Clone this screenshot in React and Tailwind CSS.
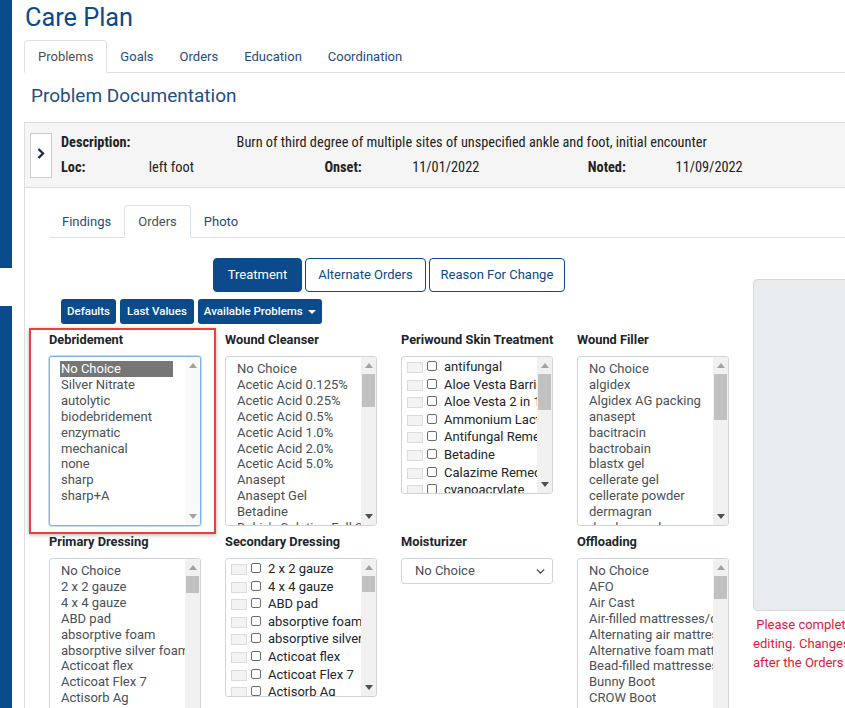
import React from "react";
import { ChevronDown } from "lucide-react";

function Arrow({ dir, dark }) {
  return (
    <svg width="8" height="5" viewBox="0 0 8 5">
      <path d={dir === "up" ? "M0 5 L4 0 L8 5Z" : "M0 0 L4 5 L8 0Z"} fill={dark ? "#505050" : "#a3a3a3"} />
    </svg>
  );
}

function Scrollbar({ thumb, empty }) {
  return (
    <div className={`w-[15px] shrink-0 flex flex-col ${empty ? "bg-[#fafafa]" : "bg-[#f1f1f1]"}`}>
      <div className="h-[17px] flex items-center justify-center">
        <Arrow dir="up" />
      </div>
      <div className="flex-1">{thumb && <div className={`mx-auto w-[13px] bg-[#c1c1c1] ${thumb}`} />}</div>
      <div className="h-[17px] flex items-center justify-center">
        <Arrow dir="down" dark={!empty} />
      </div>
    </div>
  );
}

function ListBox({ items, h, thumb, selected, focus, empty }) {
  return (
    <div
      className={`flex w-[152px] ${h} rounded-[3px] border bg-white overflow-hidden ${
        focus ? "border-[#7fb2ea] shadow-[0_0_0_1px_#c5dcf5]" : "border-[#ced4da]"
      }`}
    >
      <div className="flex-1 min-w-0 overflow-hidden pt-[4px] pl-[10px]">
        {items.map((it, i) => (
          <div
            key={i}
            className={`whitespace-nowrap leading-[15.9px] text-[13px] px-[1px] ${
              selected && i === 0 ? "bg-[#767676] text-white w-[113px]" : "text-[#495057]"
            }`}
          >
            {it}
          </div>
        ))}
      </div>
      <Scrollbar thumb={thumb} empty={empty} />
    </div>
  );
}

function CheckList({ items, h, thumb }) {
  return (
    <div className={`flex w-[152px] ${h} rounded-[3px] border border-[#ced4da] bg-white overflow-hidden`}>
      <div className="flex-1 min-w-0 overflow-hidden pt-[2px] pl-[5px]">
        {items.map((it, i) => (
          <div key={i} className="flex items-start h-[17.6px] whitespace-nowrap">
            <span className="mt-[3px] w-[16px] h-[11px] border border-[#dcdcdc] bg-[#f3f3f3] shrink-0" />
            <span className="ml-[4px] mt-[2px] w-[10px] h-[10px] rounded-[2px] border border-[#6b6b6b] bg-white shrink-0" />
            <span className="ml-[7px] text-[13px] leading-[15px] text-[#212529]">{it}</span>
          </div>
        ))}
      </div>
      <Scrollbar thumb={thumb} />
    </div>
  );
}

function Label({ children }) {
  return <div className="text-[12.8px] leading-[16px] font-bold text-[#212529] mb-[8px] whitespace-nowrap">{children}</div>;
}

const debridement = ["No Choice", "Silver Nitrate", "autolytic", "biodebridement", "enzymatic", "mechanical", "none", "sharp", "sharp+A"];
const cleanser = [
  "No Choice",
  "Acetic Acid 0.125%",
  "Acetic Acid 0.25%",
  "Acetic Acid 0.5%",
  "Acetic Acid 1.0%",
  "Acetic Acid 2.0%",
  "Acetic Acid 5.0%",
  "Anasept",
  "Anasept Gel",
  "Betadine",
  "Dakin's Solution Full Strength",
];
const periwound = [
  "antifungal",
  "Aloe Vesta Barrier",
  "Aloe Vesta 2 in 1",
  "Ammonium Lactate",
  "Antifungal Remedy",
  "Betadine",
  "Calazime Remedy",
  "cyanoacrylate",
];
const filler = [
  "No Choice",
  "algidex",
  "Algidex AG packing",
  "anasept",
  "bacitracin",
  "bactrobain",
  "blastx gel",
  "cellerate gel",
  "cellerate powder",
  "dermagran",
  "duoderm gel",
];
const primary = [
  "No Choice",
  "2 x 2 gauze",
  "4 x 4 gauze",
  "ABD pad",
  "absorptive foam",
  "absorptive silver foam",
  "Acticoat flex",
  "Acticoat Flex 7",
  "Actisorb Ag",
  "Allevyn",
];
const secondary = [
  "2 x 2 gauze",
  "4 x 4 gauze",
  "ABD pad",
  "absorptive foam",
  "absorptive silver foam",
  "Acticoat flex",
  "Acticoat Flex 7",
  "Actisorb Ag",
];
const offloading = [
  "No Choice",
  "AFO",
  "Air Cast",
  "Air-filled mattresses/cushions",
  "Alternating air mattress",
  "Alternative foam mattress",
  "Bead-filled mattresses",
  "Bunny Boot",
  "CROW Boot",
  "Cushion",
];

export default function App() {
  const topTabs = ["Problems", "Goals", "Orders", "Education", "Coordination"];
  const subTabs = ["Findings", "Orders", "Photo"];
  return (
    <div className="flex w-[845px] h-[708px] overflow-hidden bg-white font-['Roboto',sans-serif]">
      <div className="w-[12px] shrink-0 flex flex-col">
        <div className="h-[268px] bg-[#0b4a8b]" />
        <div className="h-[38px]" />
        <div className="flex-1 bg-[#0b4a8b]" />
      </div>
      <div className="flex-1 min-w-0 pl-[12px]">
        <h1 className="pl-[1px] pt-[3px] text-[25.3px] leading-[30px] text-[#0b4a8b]">Care Plan</h1>
        <div className="mt-[7px] flex h-[33px] border-b border-[#dee2e6]">
          {topTabs.map((t, i) => (
            <div
              key={t}
              className={`h-[33px] px-[13px] flex items-center text-[13px] ${
                i === 0
                  ? "border border-[#dee2e6] border-b-white bg-white rounded-t-[4px] text-[#495057]"
                  : "text-[#1e4b7f]"
              }`}
            >
              {t}
            </div>
          ))}
        </div>
        <h2 className="mt-[11px] pl-[7px] text-[19px] leading-[24px] text-[#1d4f86]">Problem Documentation</h2>
        <div className="mt-[14px] border-l border-[#dddddd] h-[600px]">
          <div className="flex items-start h-[66px] bg-[#f5f5f5] border-y border-[#dddddd] pt-[7px] pl-[5px] w-[900px]">
            <div className="mt-[3px] w-[22px] h-[45px] bg-white border border-[#cccccc] flex justify-center pt-[14px] shrink-0">
              <svg width="8" height="11" viewBox="0 0 8 11">
                <polyline points="1.5,1 6,5.5 1.5,10" fill="none" stroke="#1c2a48" strokeWidth="2.3" />
              </svg>
            </div>
            <div className="ml-[9px] grid grid-cols-[repeat(8,87.8px)] auto-rows-[25px] items-center text-[14.3px] text-[#222] font-['Liberation_Sans_Narrow','Roboto_Condensed','Roboto',sans-serif]">
              <div className="col-span-2 font-bold">Description:</div>
              <div className="col-span-6 whitespace-nowrap">
                Burn of third degree of multiple sites of unspecified ankle and foot, initial encounter
              </div>
              <div className="font-bold">Loc:</div>
              <div>left foot</div>
              <div />
              <div className="font-bold">Onset:</div>
              <div>11/01/2022</div>
              <div />
              <div className="font-bold">Noted:</div>
              <div>11/09/2022</div>
            </div>
          </div>
          <div className="pl-[24px] pt-[17px]">
            <div className="flex h-[33px] border-b border-[#dee2e6] w-[900px]">
              {subTabs.map((t, i) => (
                <div
                  key={t}
                  className={`h-[33px] px-[13px] flex items-center text-[13px] ${
                    i === 1
                      ? "border border-[#dee2e6] border-b-white bg-white rounded-t-[4px] text-[#495057]"
                      : "text-[#1e4b7f]"
                  }`}
                >
                  {t}
                </div>
              ))}
            </div>
            <div className="flex gap-[24px]">
              <div className="w-[680px] shrink-0">
                <div className="mt-[20px] flex justify-center gap-[3px] text-[13px]">
                  <div className="h-[34px] px-[14px] flex items-center rounded-[4px] border border-[#0b4a8b] bg-[#0b4a8b] text-white">
                    Treatment
                  </div>
                  <div className="h-[34px] px-[12px] flex items-center rounded-[4px] border border-[#0b4a8b] bg-white text-[#0b4a8b]">
                    Alternate Orders
                  </div>
                  <div className="h-[34px] px-[11px] flex items-center rounded-[4px] border border-[#0b4a8b] bg-white text-[#0b4a8b]">
                    Reason For Change
                  </div>
                </div>
                <div className="mt-[7px] pl-[12px] flex gap-[4px] text-[11.5px] font-medium text-white">
                  <div className="h-[25px] px-[6px] flex items-center rounded-[3px] bg-[#0b4a8b]">Defaults</div>
                  <div className="h-[25px] px-[7px] flex items-center rounded-[3px] bg-[#0b4a8b]">Last Values</div>
                  <div className="h-[25px] px-[6px] flex items-center gap-[5px] rounded-[3px] bg-[#0b4a8b]">
                    Available Problems
                    <svg width="8" height="4" viewBox="0 0 8 4">
                      <path d="M0 0 L4 4 L8 0Z" fill="white" />
                    </svg>
                  </div>
                </div>
                <div className="relative mt-[8px] grid grid-cols-[repeat(4,152px)] gap-x-[24px] gap-y-[8px] items-start">
                  <div className="absolute left-[-20px] top-[-4px] w-[187px] h-[206px] border-2 border-[#e8403d] shadow-[0_1px_4px_rgba(0,0,0,0.3)] pointer-events-none" />
                  <div>
                    <Label>Debridement</Label>
                    <ListBox items={debridement} h="h-[170px]" selected focus empty />
                  </div>
                  <div>
                    <Label>Wound Cleanser</Label>
                    <ListBox items={cleanser} h="h-[170px]" thumb="h-[33px]" />
                  </div>
                  <div>
                    <Label>Periwound Skin Treatment</Label>
                    <CheckList items={periwound} h="h-[138px]" thumb="h-[36px]" />
                  </div>
                  <div>
                    <Label>Wound Filler</Label>
                    <ListBox items={filler} h="h-[170px]" thumb="h-[46px]" />
                  </div>
                  <div>
                    <Label>Primary Dressing</Label>
                    <ListBox items={primary} h="h-[170px]" thumb="h-[17px]" />
                  </div>
                  <div>
                    <Label>Secondary Dressing</Label>
                    <CheckList items={secondary} h="h-[139px]" thumb="h-[16px]" />
                  </div>
                  <div>
                    <Label>Moisturizer</Label>
                    <div className="w-[152px] h-[26px] rounded-[3px] border border-[#ced4da] bg-white flex items-center justify-between pl-[13px] pr-[5px] text-[13px] text-[#495057]">
                      No Choice
                      <ChevronDown size={13} strokeWidth={2.6} color="#444" />
                    </div>
                  </div>
                  <div>
                    <Label>Offloading</Label>
                    <ListBox items={offloading} h="h-[170px]" thumb="h-[23px]" />
                  </div>
                </div>
              </div>
              <div className="w-[300px] shrink-0 mt-[41px]">
                <div className="h-[332px] rounded-[4px] border border-[#d6d9dc] bg-[#e9ecef]" />
                <div className="mt-[4px] text-[13px] leading-[19px] text-[#e3173e] whitespace-nowrap">
                  <div>&nbsp;Please complete all required fields before</div>
                  <div>editing. Changes cannot be made</div>
                  <div>after the Orders are signed.</div>
                </div>
              </div>
            </div>
          </div>
        </div>
      </div>
    </div>
  );
}
